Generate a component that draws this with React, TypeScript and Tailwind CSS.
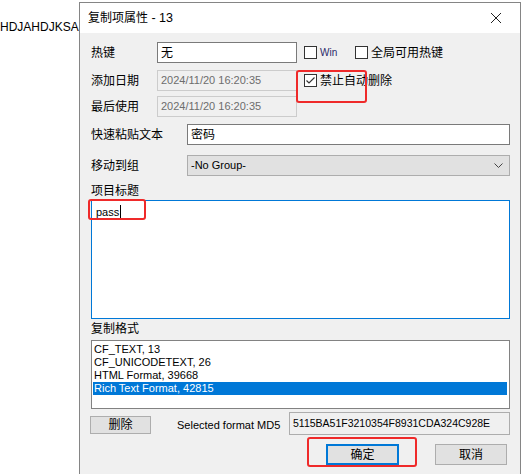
import React from 'react';

const Checkbox: React.FC<{ checked?: boolean }> = ({ checked }) => (
  <span className="flex h-[13px] w-[13px] shrink-0 items-center justify-center border border-[#333333] bg-white">
    {checked && (
      <svg width="11" height="11" viewBox="0 0 11 11">
        <polyline points="1.5,5.5 4,8 9.5,2.5" fill="none" stroke="#333333" strokeWidth="1.2" />
      </svg>
    )}
  </span>
);

const formats = [
  { name: 'CF_TEXT, 13', selected: false },
  { name: 'CF_UNICODETEXT, 26', selected: false },
  { name: 'HTML Format, 39668', selected: false },
  { name: 'Rich Text Format, 42815', selected: true },
];

const App: React.FC = () => {
  return (
    <div className="relative h-[474px] w-[521px] overflow-hidden bg-white font-['Liberation_Sans','Noto_Sans_CJK_SC',sans-serif] text-[12px] text-black">
      {/* text behind the dialog */}
      <div className="pt-[19px] text-[12px] leading-[16px]">HDJAHDJKSA</div>

      {/* dialog window */}
      <div className="absolute left-[79px] top-[2px] h-[490px] w-[442px] border border-[#858585] bg-[#f0f0f0]">
        {/* title bar */}
        <div className="flex h-[30px] items-center justify-between bg-white pl-[8px] pr-[18px]">
          <span className="leading-[16px]">
            复制项属性<span className="text-[12.5px]"> - 13</span>
          </span>
          <svg width="12" height="12" viewBox="0 0 12 12">
            <path d="M1 1 L11 11 M11 1 L1 11" stroke="#222222" strokeWidth="1" />
          </svg>
        </div>

        {/* body */}
        <div className="flex flex-col pl-[11px] pr-[10px]">
          {/* 热键 */}
          <div className="mt-[9px] flex h-[21px] items-center">
            <span className="w-[66px]">热键</span>
            <div className="flex h-[21px] w-[140px] items-center border border-[#7a7a7a] bg-white pl-[3px]">无</div>
            <div className="ml-[7px] flex w-[51px] items-center">
              <Checkbox />
              <span className="ml-[3px] text-[10px] text-[#2a2a6a]">Win</span>
            </div>
            <div className="flex items-center">
              <Checkbox />
              <span className="ml-[3px]">全局可用热键</span>
            </div>
          </div>

          {/* 添加日期 */}
          <div className="mt-[7px] flex h-[21px] items-center">
            <span className="w-[66px]">添加日期</span>
            <div className="flex h-[21px] w-[140px] items-center border border-[#cccccc] bg-[#f0f0f0] pl-[3px] text-[11px] text-[#6d6d6d]">
              2024/11/20 16:20:35
            </div>
            <div className="ml-[7px] flex items-center">
              <Checkbox checked />
              <span className="ml-[3px]">禁止自动删除</span>
            </div>
          </div>

          {/* 最后使用 */}
          <div className="mt-[5px] flex h-[21px] items-center">
            <span className="w-[66px]">最后使用</span>
            <div className="flex h-[21px] w-[140px] items-center border border-[#cccccc] bg-[#f0f0f0] pl-[3px] text-[11px] text-[#6d6d6d]">
              2024/11/20 16:20:35
            </div>
          </div>

          {/* 快速粘贴文本 */}
          <div className="mt-[7px] flex h-[21px] items-center">
            <span className="w-[96px]">快速粘贴文本</span>
            <div className="flex h-[21px] flex-1 items-center border border-[#7a7a7a] bg-white pl-[3px]">密码</div>
          </div>

          {/* 移动到组 */}
          <div className="mt-[10px] flex h-[21px] items-center">
            <span className="w-[96px]">移动到组</span>
            <div className="flex h-[21px] flex-1 items-center justify-between border border-[#adadad] bg-[#e1e1e1] pl-[3px] pr-[6px]">
              <span className="text-[11px]">-No Group-</span>
              <svg width="9" height="6" viewBox="0 0 9 6">
                <polyline points="0.5,0.5 4.5,4.5 8.5,0.5" fill="none" stroke="#444444" strokeWidth="1" />
              </svg>
            </div>
          </div>

          {/* 项目标题 */}
          <div className="mt-[6px] h-[18px] leading-[18px]">项目标题</div>
          <div className="h-[119px] border border-[#0078d7] bg-white pl-[4px] pt-[3px]">
            <div className="flex items-center text-[11px] leading-[16px]">
              <span>pass</span>
              <span className="ml-[1px] inline-block h-[14px] w-[1px] bg-black" />
            </div>
          </div>

          {/* 复制格式 */}
          <div className="mt-[1px] h-[18px] leading-[18px]">复制格式</div>
          <div className="mt-[2px] h-[69px] border border-[#828282] bg-white pl-[1px] pr-[2px] pt-[2px] text-[11px]">
            {formats.map((f) => (
              <div
                key={f.name}
                className={`h-[13px] pl-[1px] leading-[13px] ${f.selected ? 'bg-[#0078d7] text-white' : ''}`}
              >
                {f.name}
              </div>
            ))}
          </div>

          {/* MD5 row */}
          <div className="mt-[3px] flex h-[23px] items-start">
            <div className="ml-[-1px] mt-[4px] flex h-[18px] w-[61px] items-center justify-center border border-[#adadad] bg-[#e1e1e1]">
              删除
            </div>
            <span className="ml-[26px] mt-[4px] text-[11px] leading-[18px]">Selected format MD5</span>
            <div className="ml-auto flex h-[23px] w-[221px] items-start border border-[#adadad] bg-[#f0f0f0] pl-[3px] pt-[2px] text-[10.5px] leading-[16px]">
              5115BA51F3210354F8931CDA324C928E
            </div>
          </div>

          {/* buttons */}
          <div className="mr-[3px] mt-[9px] flex h-[21px] justify-end gap-[36px]">
            <div className="flex h-[21px] w-[73px] items-center justify-center border-2 border-[#0078d7] bg-[#e1e1e1]">确定</div>
            <div className="flex h-[21px] w-[72px] items-center justify-center border border-[#adadad] bg-[#e1e1e1]">取消</div>
          </div>
        </div>
      </div>

      {/* red annotation boxes */}
      <div className="absolute left-[296px] top-[70px] h-[33px] w-[71px] rounded-[3px] border-[2.5px] border-[#ef2a2a]" />
      <div className="absolute left-[88px] top-[199px] h-[21px] w-[58px] rounded-[3px] border-[2.5px] border-[#ef2a2a]" />
      <div className="absolute left-[307px] top-[437px] h-[30px] w-[110px] rounded-[3px] border-[2.5px] border-[#ef2a2a]" />
    </div>
  );
};

export default App;
